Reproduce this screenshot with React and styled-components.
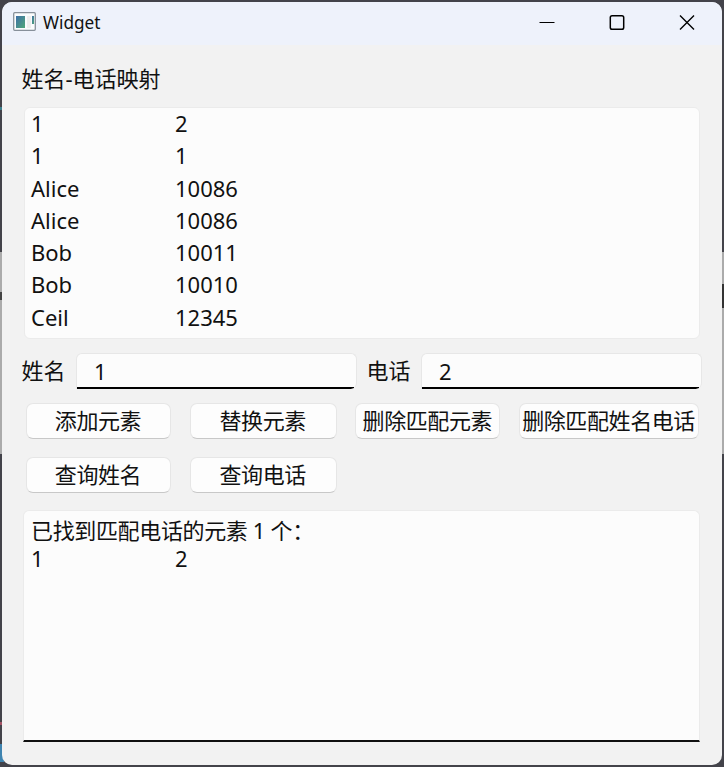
import React from "react";
import styled, { createGlobalStyle } from "styled-components";

const GlobalStyle = createGlobalStyle`
  * { box-sizing: border-box; }
  body { margin: 0; overflow: hidden; }
`;

const Desktop = styled.div`
  width: 724px;
  height: 767px;
  padding: 2px;
  color: #111;
  font: 22px/30px "Noto Sans", "Noto Sans CJK SC", sans-serif;
  background:
    linear-gradient(#3c7f8c, #3c7f8c) 0 107px / 2px 3px no-repeat,
    linear-gradient(#a35264, #a35264) 0 722px / 2px 3px no-repeat,
    linear-gradient(#3f84b0, #3f84b0) 0 744px / 4px 18px no-repeat,
    linear-gradient(#333, #333) 722px 284px / 2px 24px no-repeat,
    linear-gradient(#444, #444) 0 292px / 2px 8px no-repeat,
    linear-gradient(#ababab, #ababab) 0 252px / 724px 202px no-repeat,
    #43434a;
`;

const Window = styled.main`
  width: 720px;
  height: 763px;
  border-radius: 10px;
  background: #f2f2f2;
  overflow: hidden;
`;

const TitleBar = styled.header`
  height: 43px;
  display: flex;
  align-items: flex-start;
  padding: 10px 27px 0 11px;
  background: #eef2fb;
`;

const Title = styled.h1`
  margin: -1px auto 0 7px;
  font: 400 17.2px/24px "Noto Sans", sans-serif;
`;

const Controls = styled.div`
  display: flex;
  gap: 54px;
  padding-top: 2px;
  svg { display: block; }
`;

const Content = styled.section`
  display: flex;
  flex-direction: column;
  padding: 18px 20px 0;
`;

const Label = styled.label`
  margin-left: -0.5px;
  white-space: nowrap;
`;

const Panel = styled.div`
  height: 232px;
  border: 1px solid #ebebeb;
  border-radius: 6px;
  background: #fcfcfc;
`;

const Contacts = styled(Panel)`
  width: 676px;
  margin: 14px 0 14px 2px;
  padding: 0 6px;
`;

const Record = styled.div`
  display: grid;
  grid-template-columns: 144px 1fr;
  line-height: ${(p) => p.$line - 2}px;
  height: ${(p) => p.$line}px;
`;

const Form = styled.div`
  display: grid;
  grid-template-columns: 54px 281px 10px 54px 281px;
  height: 36px;
  line-height: 34px;
`;

const Field = styled.div`
  grid-column: ${(p) => p.$column};
  padding-left: 17px;
  border: 1px solid #e7e7e7;
  border-bottom: 0;
  border-radius: 6px;
  border-bottom-left-radius: 0;
  background: linear-gradient(#000, #000) 0 100% / calc(100% - 2px) 2px no-repeat, #fcfcfc;
  line-height: 34px;
`;

const PhoneLabel = styled(Label)`
  grid-column: 4;
`;

const Buttons = styled.div`
  display: grid;
  grid-template-columns: 145px 147px 145px 180px;
  grid-auto-rows: 36px;
  gap: 18px 18.7px;
  margin: 14px 0 17px 4px;
`;

const Button = styled.button`
  display: flex;
  justify-content: center;
  min-width: 0;
  padding: 0 1px 0 0;
  border: 1px solid #e6e6e6;
  border-bottom: 1.5px solid #c8c8c8;
  border-radius: 7px;
  background: #fdfdfd;
  color: inherit;
  font: inherit;
  line-height: 33px;
  letter-spacing: -0.4px;
  white-space: nowrap;
`;

const Results = styled(Panel)`
  width: 677px;
  margin-left: 1px;
  padding: 8px 7px;
  border-radius: 6px 6px 0 0;
  border-bottom: 2px solid #111;
`;

const Message = styled.div`
  height: 27px;
  line-height: 23px;
  letter-spacing: -0.35px;
`;

const contacts = [
  ["1", "2"],
  ["1", "1"],
  ["Alice", "10086"],
  ["Alice", "10086"],
  ["Bob", "10011"],
  ["Bob", "10010"],
  ["Ceil", "12345"],
];

const actions = ["添加元素", "替换元素", "删除匹配元素", "删除匹配姓名电话", "查询姓名", "查询电话"];

function AppIcon() {
  return (
    <svg width="23" height="19" viewBox="0 0 23 19">
      <defs>
        <linearGradient id="pane" x1="0" y1="0" x2="1" y2="1">
          <stop stopColor="#3e6fa8" />
          <stop offset="1" stopColor="#50a878" />
        </linearGradient>
      </defs>
      <rect x="0.7" y="0.7" width="21.6" height="17.6" rx="1" fill="#fafcfd" stroke="#87909a" strokeWidth="1.3" />
      <rect x="3" y="4" width="9" height="12" fill="url(#pane)" />
      <rect x="14" y="4" width="4" height="12" fill="#eee" />
      <rect x="19" y="4" width="2" height="8" fill="url(#pane)" />
    </svg>
  );
}

function WindowControls() {
  return (
    <Controls>
      <svg width="16" height="16" stroke="#000" strokeWidth="1.2">
        <path d="M0.5 8.5H15.5" />
      </svg>
      <svg width="16" height="16" fill="none" stroke="#000" strokeWidth="1.5">
        <rect x="1.3" y="1.8" width="13.4" height="13.4" rx="1.8" />
      </svg>
      <svg width="16" height="16" fill="none" stroke="#000" strokeWidth="1.4">
        <path d="M1 1.5L15 15.5M15 1.5L1 15.5" />
      </svg>
    </Controls>
  );
}

export default function App() {
  return (
    <Desktop>
      <GlobalStyle />
      <Window>
        <TitleBar>
          <AppIcon />
          <Title>Widget</Title>
          <WindowControls />
        </TitleBar>
        <Content>
          <Label>姓名-电话映射</Label>
          <Contacts>
            {contacts.map(([name, phone], i) => (
              <Record key={i} $line={32.3}>
                <span>{name}</span>
                <span>{phone}</span>
              </Record>
            ))}
          </Contacts>
          <Form>
            <Label>姓名</Label>
            <Field $column={2}>1</Field>
            <PhoneLabel>电话</PhoneLabel>
            <Field $column={5}>2</Field>
          </Form>
          <Buttons>
            {actions.map((text) => (
              <Button key={text}>{text}</Button>
            ))}
          </Buttons>
          <Results>
            <Message>已找到匹配电话的元素 1 个：</Message>
            <Record $line={27}>
              <span>1</span>
              <span>2</span>
            </Record>
          </Results>
        </Content>
      </Window>
    </Desktop>
  );
}
